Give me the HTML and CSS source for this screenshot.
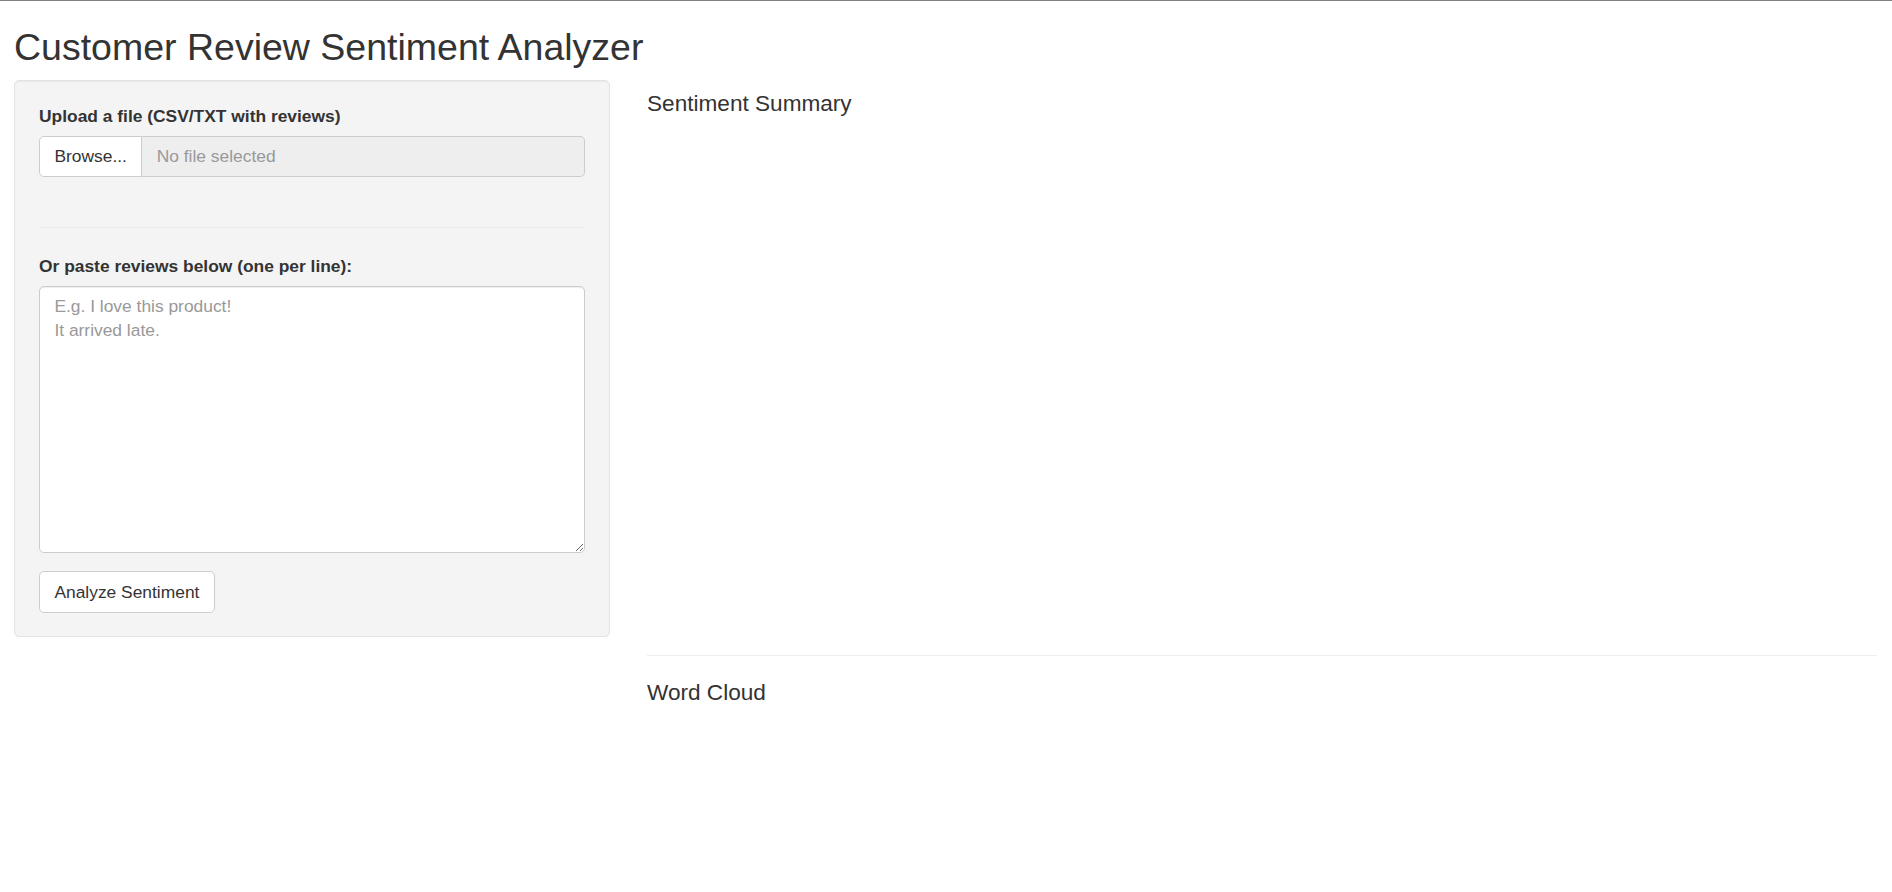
FILE: index.html
```html
<!DOCTYPE html>
<html lang="en">
<head>
<meta charset="utf-8">
<title>Customer Review Sentiment Analyzer</title>
<link rel="stylesheet" href="styles.css">
</head>
<body>
<div class="page">
  <h2 class="title">Customer Review Sentiment Analyzer</h2>
  <div class="layout">
    <div class="sidebar">
      <label class="field-label">Upload a file (CSV/TXT with reviews)</label>
      <div class="file-group">
        <span class="browse">Browse...</span>
        <span class="file-name">No file selected</span>
      </div>
      <hr class="well-hr">
      <label class="field-label" for="reviews">Or paste reviews below (one per line):</label>
      <textarea id="reviews" class="reviews" placeholder="E.g. I love this product!&#10;It arrived late."></textarea>
      <button class="analyze" type="button">Analyze Sentiment</button>
    </div>
    <div class="main">
      <h4 class="section-title">Sentiment Summary</h4>
      <div class="plot plot-summary"></div>
      <hr class="main-hr">
      <h4 class="section-title">Word Cloud</h4>
      <div class="plot plot-cloud"></div>
    </div>
  </div>
</div>
</body>
</html>
```
FILE: styles.css
```css
html, body {
  margin: 0;
  padding: 0;
}
body {
  border-top: 1px solid #808080;
  font-family: "Liberation Sans", Arial, Helvetica, sans-serif;
  font-size: 17.4px;
  line-height: 24px;
  color: #333;
  background: #fff;
}
.page {
  padding: 0 15px 0 14px;
}
.title {
  font-size: 37.5px;
  font-weight: 500;
  line-height: 40px;
  margin: 26px 0 13px 0;
  color: #333;
}
.layout {
  display: flex;
  align-items: flex-start;
}
.sidebar {
  width: 596px;
  flex: none;
  box-sizing: border-box;
  background: #f4f4f4;
  border: 1px solid #e3e3e3;
  border-radius: 5px;
  padding: 23px 24px 23px 24px;
  box-shadow: inset 0 1px 1px rgba(0, 0, 0, 0.05);
}
.field-label {
  display: block;
  font-weight: bold;
  margin-bottom: 8px;
  line-height: 24px;
}
.file-group {
  display: flex;
  height: 41px;
}
.browse {
  box-sizing: border-box;
  background: #fff;
  border: 1px solid #ccc;
  border-radius: 5px 0 0 5px;
  padding: 0 14.4px;
  line-height: 39px;
  color: #333;
  white-space: nowrap;
}
.file-name {
  flex: 1;
  box-sizing: border-box;
  background: #eee;
  border: 1px solid #ccc;
  border-left: 0;
  border-radius: 0 5px 5px 0;
  padding: 0 14.4px;
  line-height: 39px;
  color: #999;
}
.well-hr {
  border: 0;
  border-top: 1px solid #e9e9e9;
  margin: 50px 0 26px;
  height: 0;
}
.reviews {
  display: block;
  width: 100%;
  height: 267px;
  box-sizing: border-box;
  border: 1px solid #ccc;
  border-radius: 5px;
  padding: 7px 14.4px;
  margin: 0 0 18px;
  font-family: inherit;
  font-size: 17.4px;
  line-height: 24px;
  color: #555;
  background: #fff;
  box-shadow: inset 0 1px 1px rgba(0, 0, 0, 0.075);
}
.reviews::placeholder {
  color: #999;
}
.analyze {
  display: block;
  height: 42px;
  box-sizing: border-box;
  padding: 0 14.4px;
  background: #fff;
  border: 1px solid #ccc;
  border-radius: 5px;
  font-family: inherit;
  font-size: 17.4px;
  color: #333;
  cursor: pointer;
}
.main {
  flex: 1;
  margin-left: 37px;
}
.section-title {
  font-size: 22.6px;
  font-weight: 500;
  line-height: 1.1;
  margin: 12px 0 12px;
  color: #333;
}
.plot-summary {
  height: 502px;
}
.plot-cloud {
  height: 480px;
}
.main-hr {
  border: 0;
  border-top: 1px solid #eee;
  margin: 24px 0 25px;
  height: 0;
}
```
